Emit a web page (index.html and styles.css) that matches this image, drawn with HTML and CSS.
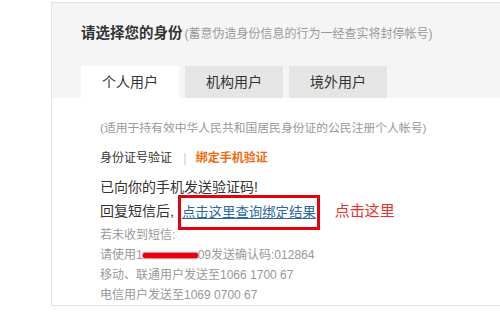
FILE: index.html
```html
<!DOCTYPE html>
<html lang="zh-CN">
  <head>
    <meta charset="UTF-8" />
    <meta name="viewport" content="width=device-width, initial-scale=1.0" />
    <title>选择身份</title>
    <link rel="stylesheet" href="styles.css">
  </head>
  <body>
    <div class="panel">
      <!-- 标题和选项卡 -->
      <div class="panel-head">
        <h2 class="title">请选择您的身份<span class="title-tip">(蓄意伪造身份信息的行为一经查实将封停帐号)</span></h2>
        <div class="tabs">
          <div class="tab active">个人用户</div>
          <div class="tab">机构用户</div>
          <div class="tab">境外用户</div>
        </div>
      </div>

      <!-- 内容 -->
      <div class="panel-body">
        <p class="tip">(适用于持有效中华人民共和国居民身份证的公民注册个人帐号)</p>
        <div class="steps">
          <span class="step">身份证号验证</span>
          <span class="sep">|</span>
          <span class="step current">绑定手机验证</span>
        </div>
        <p class="msg sent">已向你的手机发送验证码!</p>
        <p class="msg reply">回复短信后,<span class="mark"><a href="#" class="result-link">点击这里查询绑定结果</a></span><span class="hint">点击这里</span></p>
        <ul class="sms">
          <li>若未收到短信:</li>
          <li>请使用1<span class="masked"></span>09发送确认码:012864</li>
          <li>移动、联通用户发送至1066 1700 67</li>
          <li>电信用户发送至1069 0700 67</li>
        </ul>
      </div>
    </div>
  </body>
</html>
```

FILE: styles.css
```css
* {
  margin: 0;
  padding: 0;
  box-sizing: border-box;
}

body {
  padding: 2px 0 0 51px;
  background: #fff;
  font-family: "Liberation Sans", "Noto Sans CJK SC", sans-serif;
  color: #333;
}

.panel {
  border: 1px solid #e3e3e3;
  border-right: none;
  overflow: hidden;
}

/* 头部 */
.panel-head {
  background-color: #f5f5f5;
  padding: 20px 0 0 29px;
}

.title {
  font-size: 14.5px;
  font-weight: bold;
  line-height: 20px;
  color: #333;
  white-space: nowrap;
}

.title-tip {
  font-size: 12px;
  font-weight: normal;
  color: #999;
  margin-left: 2px;
}

.tabs {
  display: flex;
  gap: 6px;
  margin-top: 22px;
}

.tab {
  width: 98px;
  height: 32px;
  line-height: 32px;
  text-align: center;
  font-size: 14px;
  color: #333;
  background-color: #e5e5e5;
}

.tab.active {
  background-color: #fff;
}

/* 内容 */
.panel-body {
  padding: 20px 0 0 48px;
}

.tip {
  font-size: 11.8px;
  line-height: 20px;
  color: #999;
  white-space: nowrap;
}

.steps {
  margin-top: 10px;
  font-size: 12px;
  line-height: 20px;
}

.sep {
  color: #ccc;
  margin: 0 6px 0 8px;
}

.step.current {
  color: #f26b0f;
  font-weight: bold;
}

.msg {
  font-size: 14px;
  line-height: 20px;
  color: #333;
}

.msg.sent {
  margin-top: 9px;
}

.reply {
  line-height: 27px;
}

.mark {
  display: inline-block;
  border: 3px solid #e3000f;
  padding: 2px 1px;
  margin: -4px 0 -4px 4px;
  line-height: 24px;
  vertical-align: middle;
}

.result-link {
  font-size: 13.4px;
  color: #2a69a3;
  text-decoration: underline;
}

.hint {
  color: #e8312b;
  font-size: 15px;
  margin-left: 15px;
}

.sms {
  list-style: none;
  margin-top: -1px;
  font-size: 12px;
  line-height: 20px;
  color: #999;
}

/* 手机号遮挡 */
.masked {
  display: inline-block;
  width: 55px;
  height: 5px;
  background-color: #e3000f;
  border-radius: 2px;
  box-shadow: 0 0 1px 1px rgba(227, 0, 15, 0.5);
  vertical-align: middle;
}
```
